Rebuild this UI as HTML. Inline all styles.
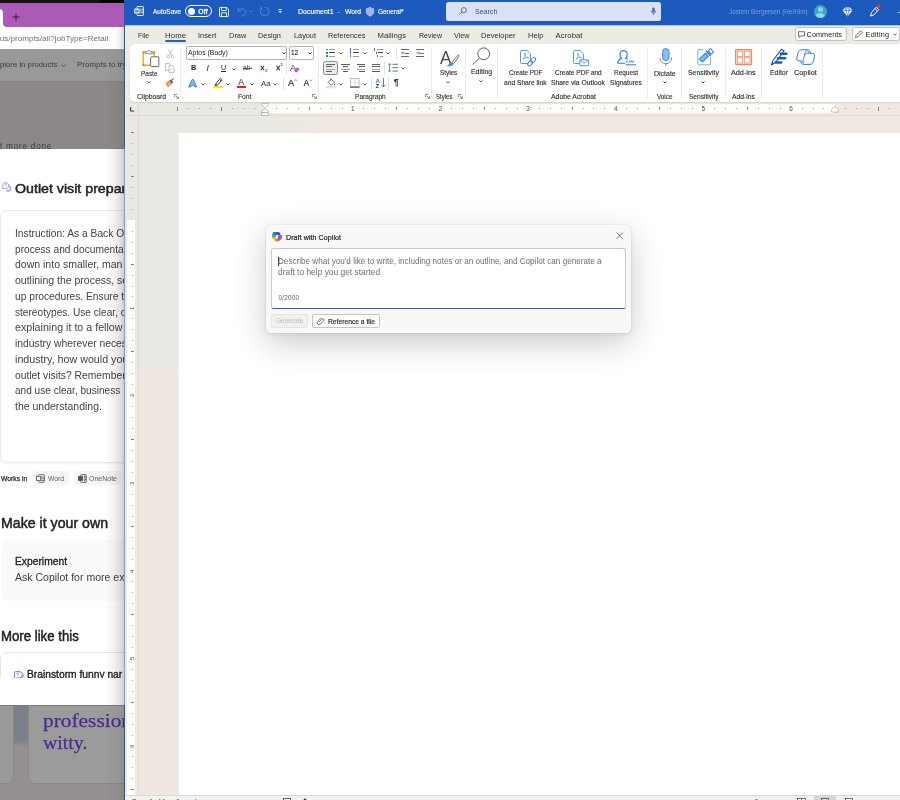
<!DOCTYPE html>
<html lang="en">
<head>
<meta charset="utf-8">
<title>Document1 - Word</title>
<style>
*{box-sizing:border-box;margin:0;padding:0}
html,body{width:900px;height:800px;overflow:hidden;background:#fff}
body{position:relative;font-family:"Liberation Sans",sans-serif;color:#262626;font-size:7px}
.a{position:absolute;display:block}
.t{position:absolute;white-space:nowrap;line-height:1;display:block;transform-origin:0 50%}
svg{overflow:visible}
#br{position:absolute;left:0;top:0;width:125px;height:800px;overflow:hidden;background:#8c8888;will-change:transform}
#wd{position:absolute;left:0;top:0;width:900px;height:800px;overflow:hidden;clip-path:inset(0 0 0 124px);will-change:transform}
#dlg{position:absolute;left:0;top:0;width:900px;height:800px;will-change:transform}
</style>
</head>
<body>
<div id="br">
<div class="a" style="left:0px;top:0px;width:125px;height:3px;background:#14130f;"></div>
<div class="a" style="left:100px;top:0px;width:25px;height:3px;background:#000;"></div>
<div class="a" style="left:0px;top:3px;width:125px;height:24px;background:#ab5ab6;"></div>
<div class="a" style="left:-6px;top:8.5px;width:9px;height:19px;background:#fff;border-radius:0 4px 0 0;"></div>
<svg class="a" style="left:11.6px;top:13px;" width="8" height="8" viewBox="0 0 8 8"><path d="M4 0.400V7.600M0.400 4H7.600" stroke="#2e1b35" stroke-width="0.900" fill="none"/></svg>
<svg class="a" style="left:3px;top:23px;" width="4" height="4" viewBox="0 0 4 4"><path d="M0 0a4 4 0 0 0 4 4H0z" fill="#fff"/></svg>
<div class="a" style="left:0px;top:27px;width:125px;height:21.5px;background:#fff;"></div>
<span class="t" style="left:-0.3px;top:35px;font-size:8.1px;color:#6e6e6e;">us/prompts/all?jobType=Retail</span>
<div class="a" style="left:0px;top:48.5px;width:125px;height:32.5px;background:#9a9999;"></div>
<span class="t" style="left:0px;top:61px;font-size:8px;transform:scaleX(0.9688);color:#3a3a3a;">plore in products</span>
<svg class="a" style="left:61px;top:63.5px;" width="5" height="3.5" viewBox="0 0 5 3.5"><path d="M0.5 0.5L2.5 2.7L4.5 0.5" stroke="#3a3a3a" stroke-width="0.8" fill="none"/></svg>
<span class="t" style="left:77.4px;top:61px;font-size:8px;transform:scaleX(0.9942);color:#3a3a3a;">Prompts to try</span>
<div class="a" style="left:0px;top:81px;width:125px;height:68px;background:#8c8888;"></div>
<div class="a" style="left:0px;top:81px;width:125px;height:1px;background:#858282;"></div>
<span class="t" style="left:0px;top:143px;font-size:8.2px;letter-spacing:0.77px;color:#3b3b3b;">t more done</span>
<div class="a" style="left:0px;top:149px;width:125px;height:556px;background:#fff;"></div>
<svg class="a" style="left:2px;top:182.4px;" width="10" height="10" viewBox="0 0 10 10"><g fill="#fff" stroke="#8a8ff0" stroke-width="0.8"><path d="M5.4 3.2a3 3 0 1 1 -1 5.6l-0.200 0.100h4.600l-0.500 -1.500a3 3 0 0 0 -2.900 -4.200z"/><path d="M3.600 0.500a3.100 3.100 0 1 1 -1.500 5.800l-1.600 0.400l0.400 -1.600a3.100 3.100 0 0 1 2.700 -4.600z"/></g><path d="M2.700 2.700a0.900 0.900 0 1 1 1.300 0.800c-0.300 0.200 -0.400 0.300 -0.400 0.600M3.600 4.900v0.300" stroke="#7378e6" stroke-width="0.600" fill="none"/></svg>
<span class="t" style="left:15px;top:182px;font-size:13.3px;transform:scaleX(1.0679);color:#242424;-webkit-text-stroke:0.5px #242424;">Outlet visit prepar</span>
<div class="a" style="left:0px;top:210px;width:140px;height:252.5px;background:#fff;border:1px solid #ebebeb;border-radius:7px;box-shadow:0 1px 2px rgba(0,0,0,.05);"></div>
<span class="t" style="left:15.4px;top:228px;font-size:10.8px;transform:scaleX(0.9471);color:#424242;">Instruction: As a Back O</span>
<span class="t" style="left:15.4px;top:244px;font-size:10.8px;transform:scaleX(0.9436);color:#424242;">process and documenta</span>
<span class="t" style="left:15.4px;top:259px;font-size:10.8px;transform:scaleX(0.9732);color:#424242;">down into smaller, man</span>
<span class="t" style="left:15.4px;top:275px;font-size:10.8px;transform:scaleX(0.9723);color:#424242;">outlining the process, se</span>
<span class="t" style="left:15.4px;top:291px;font-size:10.8px;transform:scaleX(0.9468);color:#424242;">up procedures. Ensure t</span>
<span class="t" style="left:15.4px;top:307px;font-size:10.8px;transform:scaleX(0.9375);color:#424242;">stereotypes. Use clear, c</span>
<span class="t" style="left:15.4px;top:322px;font-size:10.8px;transform:scaleX(0.9893);color:#424242;">explaining it to a fellow</span>
<span class="t" style="left:15.4px;top:338px;font-size:10.8px;transform:scaleX(0.9574);color:#424242;">industry wherever neces</span>
<span class="t" style="left:15.4px;top:354px;font-size:10.8px;transform:scaleX(0.9903);color:#424242;">industry, how would you</span>
<span class="t" style="left:15.4px;top:370px;font-size:10.8px;transform:scaleX(0.955);color:#424242;">outlet visits? Remember</span>
<span class="t" style="left:15.4px;top:385px;font-size:10.8px;transform:scaleX(0.9329);color:#424242;">and use clear, business</span>
<span class="t" style="left:15.4px;top:401px;font-size:10.8px;transform:scaleX(0.9713);color:#424242;">the understanding.</span>
<span class="t" style="left:1px;top:476px;font-size:6.9px;transform:scaleX(0.9809);color:#2e2e2e;-webkit-text-stroke:0.25px #2e2e2e;">Works in</span>
<div class="a" style="left:32px;top:471px;width:37px;height:14px;background:#f5f5f5;border-radius:2px;"></div>
<svg class="a" style="left:36px;top:473.5px;" width="9" height="9" viewBox="0 0 9 9"><g fill="none" stroke="#555" stroke-width="0.8"><rect x="2.6" y="0.6" width="5.8" height="7.8" rx="0.8"/><path d="M5 3h3.4M5 4.8h3.4M5 6.6h3.4"/><rect x="0.5" y="2.3" width="4.2" height="4.2" fill="#f5f5f5"/></g></svg>
<span class="t" style="left:48px;top:476px;font-size:6.9px;transform:scaleX(0.9779);color:#616161;">Word</span>
<div class="a" style="left:74px;top:471px;width:47px;height:14px;background:#f5f5f5;border-radius:2px;"></div>
<svg class="a" style="left:78px;top:473.5px;" width="9" height="9" viewBox="0 0 9 9"><g fill="none" stroke="#555" stroke-width="0.8"><rect x="2.6" y="0.6" width="5.8" height="7.8" rx="0.8"/><path d="M6.8 0.6v7.8M6.8 3h1.6M6.8 5.6h1.6"/><rect x="0.5" y="2.3" width="4.2" height="4.2" fill="#555"/></g></svg>
<span class="t" style="left:89px;top:476px;font-size:6.9px;letter-spacing:0.06px;color:#616161;">OneNote</span>
<span class="t" style="left:1.2px;top:516px;font-size:14.3px;transform:scaleX(0.9908);color:#242424;-webkit-text-stroke:0.5px #242424;">Make it your own</span>
<div class="a" style="left:1px;top:539.5px;width:140px;height:61px;background:#fafafa;border-radius:7px;"></div>
<span class="t" style="left:15.2px;top:556px;font-size:10.8px;transform:scaleX(0.952);color:#242424;-webkit-text-stroke:0.35px #242424;">Experiment</span>
<span class="t" style="left:15.4px;top:572px;font-size:10.8px;transform:scaleX(0.975);color:#424242;">Ask Copilot for more ex</span>
<span class="t" style="left:1.2px;top:629px;font-size:14.3px;transform:scaleX(0.9236);color:#242424;-webkit-text-stroke:0.5px #242424;">More like this</span>
<div class="a" style="left:0px;top:651.5px;width:140px;height:26px;overflow:hidden;"><div class="a" style="left:0;top:0;width:140px;height:60px;border:1px solid #e6e6e6;border-radius:7px;background:#fff"></div><svg class="a" style="left:14px;top:19px;" width="10" height="9" viewBox="0 0 10 9"><g fill="none" stroke="#5b6fe0" stroke-width="0.9"><path d="M0.6 1.6a1 1 0 0 1 1 -1h3.6a3 3 0 0 1 0 6.4h-3.2l-1.4 1.3z"/><path d="M6 7a2.8 2.8 0 0 0 3.3 -3.4"/></g><path d="M2.6 3a0.9 0.9 0 1 1 1.2 0.9c-0.2 0.2 -0.3 0.3 -0.3 0.6M3.5 5.4v0.3" stroke="#5b6fe0" stroke-width="0.7" fill="none"/></svg><span class="t" style="left:27px;top:17px;font-size:10.8px;transform:scaleX(0.95);color:#242424;-webkit-text-stroke:0.35px #242424;">Brainstorm funny nar</span></div>
<div class="a" style="left:0px;top:705px;width:125px;height:95px;background:#959193;"></div>
<div class="a" style="left:-20px;top:705px;width:33.5px;height:78.5px;background:#9b999a;border:1px solid #8b8789;border-top:0;border-radius:0 0 7px 7px;"></div>
<div class="a" style="left:13.5px;top:705px;width:14px;height:35px;background:#7b818c;"></div>
<div class="a" style="left:13.5px;top:740px;width:14px;height:8px;background:linear-gradient(#7b818c,#959193);"></div>
<div class="a" style="left:27.5px;top:705px;width:120px;height:78.5px;background:#9c9b9c;border:1px solid #8b8789;border-top:0;border-radius:0 0 0 7px;"></div>
<div class="a" style="left:0px;top:705px;width:125px;height:1.2px;background:#7f7b7d;"></div>
<span class="t" style="left:43px;top:713px;font-size:17.8px;transform:scaleX(1.2014);color:#4a2d92;font-family:'Liberation Serif',serif;-webkit-text-stroke:0.25px #4a2d92;">profession</span>
<span class="t" style="left:43px;top:735px;font-size:17.8px;transform:scaleX(1.1132);color:#4a2d92;font-family:'Liberation Serif',serif;-webkit-text-stroke:0.25px #4a2d92;">witty.</span>
<div class="a" style="left:105px;top:27px;width:20px;height:22px;background:linear-gradient(to right,rgba(0,0,0,0) 50%,rgba(0,0,0,.08) 80%,rgba(0,0,0,.2));"></div>
<div class="a" style="left:105px;top:49px;width:20px;height:99px;background:linear-gradient(to right,rgba(0,0,0,0),rgba(0,0,0,.02) 45%,rgba(0,0,0,.05) 80%,rgba(0,0,0,.09));"></div>
<div class="a" style="left:105px;top:148px;width:20px;height:557px;background:linear-gradient(to right,rgba(0,0,0,0),rgba(0,0,0,.05) 45%,rgba(0,0,0,.13) 80%,rgba(0,0,0,.22));"></div>
<div class="a" style="left:105px;top:705px;width:20px;height:95px;background:linear-gradient(to right,rgba(0,0,0,0),rgba(0,0,0,.02) 45%,rgba(0,0,0,.05) 80%,rgba(0,0,0,.09));"></div>
</div>
<div id="wd">
<div class="a" style="left:124px;top:25px;width:776px;height:78px;background:#ecebe4;"></div>
<div class="a" style="left:124px;top:0px;width:776px;height:25px;background:#1c5abd;"></div>
<div class="a" style="left:124px;top:25px;width:776px;height:1px;background:#aebfdc;"></div>
<div class="a" style="left:124px;top:102px;width:776px;height:700px;background:#efe8e0;"></div>
<div class="a" style="left:124px;top:102px;width:776px;height:31px;background:linear-gradient(to right,#e9e8e2 0,#e9e8e2 120px,#efe9e2 200px,#efe9e2 100%);"></div>
<div class="a" style="left:124px;top:133px;width:55px;height:232px;background:#e9e8e2;"></div>
<div class="a" style="left:124px;top:365px;width:55px;height:10px;background:linear-gradient(#e9e8e2,#efe8e0);"></div>
<div class="a" style="left:130px;top:43.8px;width:780px;height:58.3px;background:#fff;border-radius:5px 0 0 5px;box-shadow:0 0.5px 1.5px rgba(0,0,0,.1);"></div>
<svg class="a" style="left:134px;top:6px;" width="10" height="10" viewBox="0 0 10 10"><g fill="none" stroke="#fff" stroke-width="0.9"><path d="M3 2.2V1.2a0.7 0.7 0 0 1 0.7 -0.7h5a0.7 0.7 0 0 1 0.7 0.7v7.6a0.7 0.7 0 0 1 -0.7 0.7h-5a0.7 0.7 0 0 1 -0.7 -0.7V7.8"/><path d="M5.6 3.2h3.8M5.6 5h3.8M5.6 6.8h3.8" stroke-width="0.7"/></g><rect x="0.3" y="2.4" width="5.2" height="5.2" rx="0.6" fill="#fff"/><path d="M1.2 3.6l0.8 2.9l0.9 -2.6l0.9 2.6l0.8 -2.9" stroke="#1f5cbe" stroke-width="0.7" fill="none"/></svg>
<span class="t" style="left:153.2px;top:8px;font-size:7.3px;transform:scaleX(0.8876);color:#fff;-webkit-text-stroke:0.15px #fff;">AutoSave</span>
<div class="a" style="left:185px;top:5.3px;width:26.6px;height:11.6px;border:1px solid #fff;border-radius:6px;"></div>
<div class="a" style="left:187.6px;top:7.6px;width:7px;height:7px;background:#fff;border-radius:50%;"></div>
<span class="t" style="left:198.3px;top:9px;font-size:6.8px;letter-spacing:0.18px;color:#fff;-webkit-text-stroke:0.3px #fff;">Off</span>
<svg class="a" style="left:219px;top:6.5px;" width="10" height="10" viewBox="0 0 10 10"><g fill="none" stroke="#fff" stroke-width="0.9"><path d="M0.5 1.2a0.7 0.7 0 0 1 0.7 -0.7h6.6l1.7 1.7v6.6a0.7 0.7 0 0 1 -0.7 0.7h-7.6a0.7 0.7 0 0 1 -0.7 -0.7z"/><path d="M2.6 0.6v3h4.6v-3M2.4 9.4v-3.6h5.2v3.6"/></g></svg>
<svg class="a" style="left:236.5px;top:6.5px;" width="10" height="10" viewBox="0 0 10 10"><path d="M1 0.8v3.4h3.4M1.2 4a4 4 0 0 1 7.6 1.4c0 1.6 -1.3 2.6 -4.4 4" fill="none" stroke="#5f88d4" stroke-width="0.9"/></svg>
<svg class="a" style="left:248.8px;top:9.8px;" width="4" height="3" viewBox="0 0 4 3"><path d="M0.4 0.5L2 2.2L3.6 0.5" fill="none" stroke="#5f88d4" stroke-width="0.8"/></svg>
<svg class="a" style="left:259px;top:6.2px;" width="10.5" height="10.5" viewBox="0 0 10.5 10.5"><path d="M2.400 0.600v3M2.600 2.600a4.300 4.300 0 1 0 3 -1.400" fill="none" stroke="#5f88d4" stroke-width="0.900"/></svg>
<svg class="a" style="left:278px;top:9px;" width="4.4" height="4.6" viewBox="0 0 4.4 4.6"><path d="M0.400 0.500h3.600" stroke="#fff" stroke-width="0.800"/><path d="M0.500 2h3.400L2.200 4z" fill="#fff"/></svg>
<span class="t" style="left:297.7px;top:8px;font-size:7.3px;transform:scaleX(0.9563);color:#fff;-webkit-text-stroke:0.15px #fff;">Document1</span>
<span class="t" style="left:337.6px;top:9px;font-size:6.9px;color:#fff;">-</span>
<span class="t" style="left:344.6px;top:8px;font-size:7.3px;transform:scaleX(0.9243);color:#fff;-webkit-text-stroke:0.15px #fff;">Word</span>
<svg class="a" style="left:366px;top:6.6px;" width="8" height="9.6" viewBox="0 0 8 9.6"><path d="M4 0.3c1.2 0.9 2.4 1.2 3.7 1.3v3.2c0 2.2 -1.5 3.6 -3.7 4.5c-2.2 -0.9 -3.7 -2.3 -3.7 -4.5V1.6c1.3 -0.1 2.5 -0.4 3.7 -1.3z" fill="#9db6e6" stroke="#c9d7f2" stroke-width="0.6"/></svg>
<span class="t" style="left:377.6px;top:8px;font-size:7.3px;transform:scaleX(0.8816);color:#fff;-webkit-text-stroke:0.15px #fff;">General*</span>
<div class="a" style="left:446px;top:2px;width:215px;height:18.7px;background:#d9e1f3;border-radius:2.5px;"></div>
<svg class="a" style="left:459px;top:7px;" width="8" height="8" viewBox="0 0 8 8"><circle cx="4.9" cy="3.1" r="2.5" fill="none" stroke="#2b57a8" stroke-width="0.8"/><path d="M3.1 4.9L0.5 7.5" stroke="#2b57a8" stroke-width="0.8"/></svg>
<span class="t" style="left:475px;top:8px;font-size:7px;letter-spacing:0.02px;color:#2c4f95;">Search</span>
<svg class="a" style="left:650.5px;top:7px;" width="5" height="9" viewBox="0 0 5 9"><rect x="1.3" y="0.4" width="2.4" height="5" rx="1.2" fill="#3b68bd"/><path d="M0.4 3.6v0.6a2.1 2.1 0 0 0 4.2 0v-0.6M2.5 6.4v1.8" fill="none" stroke="#3b68bd" stroke-width="0.7"/></svg>
<span class="t" style="left:728.8px;top:9px;font-size:6.6px;transform:scaleX(0.9665);color:#7d9fde;">Jostein Bergersen (He/Him)</span>
<div class="a" style="left:813.5px;top:5px;width:13px;height:13px;background:#3aa7c4;border-radius:50%;overflow:hidden;"><div class="a" style="left:4px;top:2.2px;width:5px;height:5px;border-radius:50%;background:#8fd6e6"></div><div class="a" style="left:1.8px;top:8px;width:9.4px;height:8px;border-radius:4.5px 4.5px 0 0;background:#8fd6e6"></div></div>
<svg class="a" style="left:842px;top:6.5px;" width="11" height="10" viewBox="0 0 11 10"><path d="M3 0.6h5l2.4 3L5.5 9.4L0.6 3.6z" fill="#fff"/><path d="M0.8 3.6h9.4M3.2 0.8l2.3 8.2l2.3 -8.2M3.4 3.6l2.1 -2.8l2.1 2.8" fill="none" stroke="#1f5cbe" stroke-width="0.6"/></svg>
<svg class="a" style="left:869px;top:4px;" width="12" height="13" viewBox="0 0 12 13"><path d="M7.3 3.2l2.4 2.4l-5 5.4l-3.2 1l0.9 -3.3z" fill="none" stroke="#fff" stroke-width="1"/><path d="M6 4.6l2.4 2.4" stroke="#fff" stroke-width="0.8"/><circle cx="9.6" cy="2.2" r="2" fill="#e5332f"/></svg>
<span class="t" style="left:897.5px;top:8px;font-size:8px;color:#fff;">–</span>
<span class="t" style="left:138px;top:32px;font-size:7.7px;transform:scaleX(0.8865);color:#2f2f2f;">File</span>
<span class="t" style="left:165px;top:32px;font-size:7.7px;letter-spacing:0.15px;color:#2f2f2f;">Home</span>
<span class="t" style="left:197.6px;top:32px;font-size:7.7px;transform:scaleX(0.9555);color:#2f2f2f;">Insert</span>
<span class="t" style="left:228.6px;top:32px;font-size:7.7px;transform:scaleX(0.9684);color:#2f2f2f;">Draw</span>
<span class="t" style="left:258px;top:32px;font-size:7.7px;transform:scaleX(0.9596);color:#2f2f2f;">Design</span>
<span class="t" style="left:294px;top:32px;font-size:7.7px;transform:scaleX(0.9516);color:#2f2f2f;">Layout</span>
<span class="t" style="left:328px;top:32px;font-size:7.7px;transform:scaleX(0.9523);color:#2f2f2f;">References</span>
<span class="t" style="left:377.5px;top:32px;font-size:7.7px;letter-spacing:0.04px;color:#2f2f2f;">Mailings</span>
<span class="t" style="left:418.5px;top:32px;font-size:7.7px;transform:scaleX(0.911);color:#2f2f2f;">Review</span>
<span class="t" style="left:453.5px;top:32px;font-size:7.7px;transform:scaleX(0.9365);color:#2f2f2f;">View</span>
<span class="t" style="left:481px;top:32px;font-size:7.7px;transform:scaleX(0.9829);color:#2f2f2f;">Developer</span>
<span class="t" style="left:527.5px;top:32px;font-size:7.7px;transform:scaleX(0.9787);color:#2f2f2f;">Help</span>
<span class="t" style="left:555.5px;top:32px;font-size:7.7px;letter-spacing:0.08px;color:#2f2f2f;">Acrobat</span>
<div class="a" style="left:164.5px;top:40px;width:21.6px;height:1.6px;background:#2a5fc0;border-radius:1px;"></div>
<div class="a" style="left:794.5px;top:27.3px;width:52px;height:13.4px;background:#fff;border:1px solid #c6c3bf;border-radius:2.5px;"></div>
<svg class="a" style="left:798px;top:30.5px;" width="7" height="7" viewBox="0 0 7 7"><path d="M0.5 0.7h6v4.2h-3.6l-1.5 1.5v-1.5h-0.9z" fill="none" stroke="#333" stroke-width="0.7"/></svg>
<span class="t" style="left:806.6px;top:31px;font-size:7.3px;letter-spacing:0.02px;color:#222;">Comments</span>
<div class="a" style="left:851.5px;top:27.3px;width:48px;height:13.4px;background:#fff;border:1px solid #c6c3bf;border-radius:2.5px;"></div>
<svg class="a" style="left:855px;top:29.8px;" width="8" height="8" viewBox="0 0 8 8"><path d="M5.6 0.8l1.6 1.6l-4.6 4.6l-2.1 0.5l0.5 -2.1z" fill="none" stroke="#333" stroke-width="0.7"/></svg>
<span class="t" style="left:865.6px;top:31px;font-size:7.3px;letter-spacing:0.18px;color:#222;">Editing</span>
<svg class="a" style="left:893px;top:32.8px;" width="4" height="3" viewBox="0 0 4 3"><path d="M0.4 0.5L2 2.2L3.6 0.5" fill="none" stroke="#333" stroke-width="0.7"/></svg>
<svg class="a" style="left:142px;top:48.5px;" width="17" height="18" viewBox="0 0 17 18"><path d="M12.2 6.6V3.1H1.2V16.2H8.2" fill="none" stroke="#f5a52b" stroke-width="1.4"/><path d="M12.2 6.6V3.100h-1.500M1.200 4.500V3.100h1.600M1.200 14.800v1.400h1.600" fill="none" stroke="#f0812d" stroke-width="1.400"/><path d="M3.400 4.700V2.900h1.500a2 2 0 0 1 3.800 0h1.500v1.800z" fill="#fff" stroke="#707070" stroke-width="0.800" stroke-linejoin="round"/><rect x="8.600" y="7.800" width="8.200" height="9.800" rx="0.700" fill="#fff" stroke="#666" stroke-width="1"/></svg>
<span class="t" style="left:141px;top:70px;font-size:7.5px;transform:scaleX(0.8603);color:#2b2b2b;-webkit-text-stroke:0.12px #2b2b2b;">Paste</span>
<svg class="a" style="left:146.9px;top:81.4px;" width="4" height="2.4" viewBox="0 0 4 2.4"><path d="M0.4 0.4L2 2L3.6 0.4" fill="none" stroke="#444" stroke-width="0.9"/></svg>
<svg class="a" style="left:165.5px;top:48.5px;" width="9" height="9.5" viewBox="0 0 9 9.5"><path d="M2.2 0.4L5.8 6.6M6.6 0.4L3 6.6" fill="none" stroke="#b4b4b4" stroke-width="0.8"/><circle cx="2.3" cy="7.7" r="1.3" fill="none" stroke="#b4b4b4" stroke-width="0.8"/><circle cx="6.5" cy="7.7" r="1.3" fill="none" stroke="#b4b4b4" stroke-width="0.8"/></svg>
<svg class="a" style="left:165.2px;top:62.8px;" width="10" height="10" viewBox="0 0 10 10"><path d="M0.5 0.5h3.8l1.2 1.2v5.8h-5z" fill="#fff" stroke="#b4b4b4" stroke-width="0.8"/><path d="M4 2.6h3.4l1.8 1.8v5.2h-5.2z" fill="#fff" stroke="#b4b4b4" stroke-width="0.8"/><path d="M5.4 6.8h2.4" stroke="#c8c8c8" stroke-width="0.6"/></svg>
<svg class="a" style="left:165px;top:78.3px;" width="10" height="9.5" viewBox="0 0 10 9.5"><path d="M0.400 5.400L4.400 2.200l2.800 3.600L3.600 8.900c-1 -0.100 -1.600 -0.500 -1.900 -1.300c0.500 -0.300 0.600 -0.600 0.500 -1c-0.600 0.100 -1.300 -0.300 -1.800 -1.200z" fill="#f47a22"/><path d="M2.300 5.200l2.500 2.900M3.600 4.200l2.400 3" stroke="#fff" stroke-width="0.700"/><path d="M4.600 2.400l1.400 -1.100l2.300 2.900l-1.300 1.200z" fill="#5a5a5a"/><path d="M7 1.900L8.800 0.400" stroke="#5a5a5a" stroke-width="1.100"/></svg>
<span class="t" style="left:136.9px;top:93px;font-size:7.5px;transform:scaleX(0.9064);color:#2b2b2b;-webkit-text-stroke:0.12px #2b2b2b;">Clipboard</span>
<svg class="a" style="left:174px;top:94px;" width="5" height="5" viewBox="0 0 5 5"><path d="M0.4 3.2V0.4H3.2" fill="none" stroke="#555" stroke-width="0.7"/><path d="M2 2L4.2 4.2M4.4 2.4V4.4H2.4" fill="none" stroke="#555" stroke-width="0.7"/></svg>
<div class="a" style="left:179.9px;top:46.5px;width:1px;height:52.5px;background:#ececec;"></div>
<div class="a" style="left:186.3px;top:46.4px;width:101.2px;height:13.3px;background:#fff;border:1px solid #b2b2b2;border-radius:2px;"></div>
<span class="t" style="left:188.2px;top:49px;font-size:7.5px;transform:scaleX(0.918);color:#1f1f1f;">Aptos (Body)</span>
<svg class="a" style="left:281.6px;top:51.9px;" width="4" height="2.4" viewBox="0 0 4 2.4"><path d="M0.4 0.4L2 2L3.6 0.4" fill="none" stroke="#333" stroke-width="0.9"/></svg>
<div class="a" style="left:289.3px;top:46.4px;width:24.5px;height:13.3px;background:#fff;border:1px solid #b2b2b2;border-radius:2px;"></div>
<span class="t" style="left:291.4px;top:49px;font-size:7.5px;transform:scaleX(0.8511);color:#1f1f1f;-webkit-text-stroke:0.15px #1f1f1f;">12</span>
<svg class="a" style="left:308px;top:51.9px;" width="4" height="2.4" viewBox="0 0 4 2.4"><path d="M0.4 0.4L2 2L3.6 0.4" fill="none" stroke="#333" stroke-width="0.9"/></svg>
<span class="t" style="left:190.9px;top:64px;font-size:7.4px;color:#2b2b2b;font-weight:700;">B</span>
<span class="t" style="left:206.6px;top:64px;font-size:8.4px;color:#2b2b2b;font-style:italic;">I</span>
<span class="t" style="left:221px;top:64px;font-size:7.2px;color:#2b2b2b;">U</span>
<div class="a" style="left:220.6px;top:71.3px;width:5.6px;height:0.7px;background:#2b2b2b;"></div>
<svg class="a" style="left:232.2px;top:67.5px;" width="4" height="2.4" viewBox="0 0 4 2.4"><path d="M0.4 0.4L2 2L3.6 0.4" fill="none" stroke="#444" stroke-width="0.9"/></svg>
<span class="t" style="left:243.4px;top:64px;font-size:7px;transform:scaleX(0.9761);color:#444;">ab</span>
<div class="a" style="left:242.8px;top:67.9px;width:8.8px;height:0.6px;background:#555;"></div>
<span class="t" style="left:260.6px;top:64px;font-size:7.8px;color:#2b2b2b;-webkit-text-stroke:0.3px #2b2b2b;">x</span>
<span class="t" style="left:265.2px;top:69px;font-size:4px;color:#2b7bd6;-webkit-text-stroke:0.2px #2b7bd6;">2</span>
<span class="t" style="left:276.2px;top:64px;font-size:7.8px;color:#2b2b2b;-webkit-text-stroke:0.3px #2b2b2b;">x</span>
<span class="t" style="left:280.4px;top:63px;font-size:4px;color:#2b7bd6;-webkit-text-stroke:0.2px #2b7bd6;">2</span>
<div class="a" style="left:286.2px;top:61.5px;width:1px;height:13.5px;background:#e4e4e4;"></div>
<span class="t" style="left:290px;top:63px;font-size:9.4px;color:#3a3a3a;">A</span>
<svg class="a" style="left:294px;top:67px;" width="5.6" height="5.8" viewBox="0 0 5.6 5.8"><rect x="0.800" y="1.700" width="4" height="2.600" rx="0.500" transform="rotate(-40 2.800 3)" fill="#b44cc4" stroke="#a13bb0" stroke-width="0.600"/><path d="M2.300 2.200l1.500 1.800" stroke="#f0d5f3" stroke-width="0.600"/></svg>
<svg class="a" style="left:188.3px;top:79px;" width="9.5" height="8.4" viewBox="0 0 9.5 8.4"><path d="M0.9 7.9L4.1 0.6h1.3L8.6 7.9H6.9L6.2 6.2H3.3L2.6 7.9z" fill="#a9cdf5" stroke="#2a76d8" stroke-width="1" stroke-linejoin="round"/><path d="M3.9 4.8h1.7L4.75 2.6z" fill="#fff" stroke="#2672d6" stroke-width="0.5"/></svg>
<svg class="a" style="left:200.7px;top:82.7px;" width="4" height="2.4" viewBox="0 0 4 2.4"><path d="M0.4 0.4L2 2L3.6 0.4" fill="none" stroke="#444" stroke-width="0.9"/></svg>
<svg class="a" style="left:213px;top:77.8px;" width="10" height="10.2" viewBox="0 0 10 10.2"><path d="M2.400 6.200L6.400 1.400l1.800 1.500L4.200 7.600l-2.200 0.500z" fill="#fff" stroke="#3a3a3a" stroke-width="1"/><path d="M6.400 1.400L7.400 0.400l1.800 1.500l-1 1" fill="none" stroke="#3a3a3a" stroke-width="0.900"/><path d="M2 8.100l1.800 -2.200" stroke="#3a3a3a" stroke-width="1"/><rect x="0" y="8" width="9.6" height="2.1" fill="#ffeb00"/></svg>
<svg class="a" style="left:226.3px;top:82.7px;" width="4" height="2.4" viewBox="0 0 4 2.4"><path d="M0.4 0.4L2 2L3.6 0.4" fill="none" stroke="#444" stroke-width="0.9"/></svg>
<span class="t" style="left:238.2px;top:78px;font-size:8.8px;color:#2b2b2b;">A</span>
<div class="a" style="left:236.6px;top:85.8px;width:9.7px;height:2.1px;background:#e81e25;"></div>
<svg class="a" style="left:250.2px;top:82.7px;" width="4" height="2.4" viewBox="0 0 4 2.4"><path d="M0.4 0.4L2 2L3.6 0.4" fill="none" stroke="#444" stroke-width="0.9"/></svg>
<span class="t" style="left:260.9px;top:80px;font-size:7.8px;letter-spacing:0.26px;color:#3a3a3a;">Aa</span>
<svg class="a" style="left:273.3px;top:82.7px;" width="4" height="2.4" viewBox="0 0 4 2.4"><path d="M0.4 0.4L2 2L3.6 0.4" fill="none" stroke="#444" stroke-width="0.9"/></svg>
<div class="a" style="left:283px;top:76.5px;width:1px;height:13.8px;background:#e4e4e4;"></div>
<span class="t" style="left:288px;top:79px;font-size:9.2px;color:#2b2b2b;-webkit-text-stroke:0.2px #2b2b2b;">A</span>
<svg class="a" style="left:294.4px;top:79px;" width="3.6" height="2.4" viewBox="0 0 3.6 2.4"><path d="M0.4 2L1.8 0.5L3.2 2" fill="none" stroke="#2b7bd6" stroke-width="0.7"/></svg>
<span class="t" style="left:303.8px;top:80px;font-size:8.2px;color:#2b2b2b;-webkit-text-stroke:0.2px #2b2b2b;">A</span>
<svg class="a" style="left:308.8px;top:79.2px;" width="3.6" height="2.4" viewBox="0 0 3.6 2.4"><path d="M0.4 0.5L1.8 2L3.2 0.5" fill="none" stroke="#2b7bd6" stroke-width="0.7"/></svg>
<span class="t" style="left:238.3px;top:93px;font-size:7.5px;transform:scaleX(0.8995);color:#2b2b2b;-webkit-text-stroke:0.12px #2b2b2b;">Font</span>
<svg class="a" style="left:311.8px;top:94px;" width="5" height="5" viewBox="0 0 5 5"><path d="M0.4 3.2V0.4H3.2" fill="none" stroke="#555" stroke-width="0.7"/><path d="M2 2L4.2 4.2M4.4 2.4V4.4H2.4" fill="none" stroke="#555" stroke-width="0.7"/></svg>
<div class="a" style="left:317.9px;top:46.5px;width:1px;height:52.5px;background:#ececec;"></div>
<div class="a" style="left:325.9px;top:48.5px;width:1.8px;height:1.8px;background:#2b7bd6;border-radius:0.3px;"></div><div class="a" style="left:328.9px;top:48.95px;width:5.9px;height:0.9px;background:#9a9a9a;"></div><div class="a" style="left:325.9px;top:51.8px;width:1.8px;height:1.8px;background:#2b7bd6;border-radius:0.3px;"></div><div class="a" style="left:328.9px;top:52.25px;width:5.9px;height:0.9px;background:#4a4a4a;"></div><div class="a" style="left:325.9px;top:55.2px;width:1.8px;height:1.8px;background:#2b7bd6;border-radius:0.3px;"></div><div class="a" style="left:328.9px;top:55.65px;width:5.9px;height:0.9px;background:#9a9a9a;"></div>
<svg class="a" style="left:339.2px;top:51.9px;" width="4" height="2.4" viewBox="0 0 4 2.4"><path d="M0.4 0.4L2 2L3.6 0.4" fill="none" stroke="#444" stroke-width="0.9"/></svg>
<div class="a" style="left:350.4px;top:48.1px;width:0.9px;height:2.6px;background:#2b7bd6;"></div><div class="a" style="left:352.9px;top:48.95px;width:5.9px;height:0.9px;background:#9a9a9a;"></div><div class="a" style="left:350.4px;top:51.4px;width:0.9px;height:2.6px;background:#2b7bd6;"></div><div class="a" style="left:352.9px;top:52.25px;width:5.9px;height:0.9px;background:#4a4a4a;"></div><div class="a" style="left:350.4px;top:54.8px;width:0.9px;height:2.6px;background:#2b7bd6;"></div><div class="a" style="left:352.9px;top:55.65px;width:5.9px;height:0.9px;background:#9a9a9a;"></div>
<svg class="a" style="left:363px;top:51.9px;" width="4" height="2.4" viewBox="0 0 4 2.4"><path d="M0.4 0.4L2 2L3.6 0.4" fill="none" stroke="#444" stroke-width="0.9"/></svg>
<div class="a" style="left:374.2px;top:48.2px;width:0.9px;height:2.4px;background:#2b7bd6;"></div><div class="a" style="left:376.6px;top:48.95px;width:6.2px;height:0.9px;background:#9a9a9a;"></div><div class="a" style="left:375.8px;top:51.5px;width:0.9px;height:2.4px;background:#2b7bd6;"></div><div class="a" style="left:378.2px;top:52.25px;width:4.6px;height:0.9px;background:#4a4a4a;"></div><div class="a" style="left:377.4px;top:54.9px;width:0.9px;height:2.4px;background:#2b7bd6;"></div><div class="a" style="left:379.8px;top:55.65px;width:3px;height:0.9px;background:#9a9a9a;"></div>
<svg class="a" style="left:386.2px;top:51.9px;" width="4" height="2.4" viewBox="0 0 4 2.4"><path d="M0.4 0.4L2 2L3.6 0.4" fill="none" stroke="#444" stroke-width="0.9"/></svg>
<div class="a" style="left:395.9px;top:46.5px;width:1px;height:13px;background:#e4e4e4;"></div>
<div class="a" style="left:400.6px;top:49.1px;width:8.6px;height:0.8px;background:#6b6b6b;"></div><div class="a" style="left:400.6px;top:55.9px;width:8.6px;height:0.8px;background:#6b6b6b;"></div><div class="a" style="left:405.2px;top:52.5px;width:4px;height:0.8px;background:#6b6b6b;"></div><svg class="a" style="left:400.6px;top:51px;" width="4.4" height="3.8" viewBox="0 0 4.4 3.8"><path d="M4.2 1.9H1M2.2 0.5L0.7 1.9L2.2 3.3" fill="none" stroke="#2b7bd6" stroke-width="0.8"/></svg>
<div class="a" style="left:415.8px;top:49.1px;width:8.6px;height:0.8px;background:#6b6b6b;"></div><div class="a" style="left:415.8px;top:55.9px;width:8.6px;height:0.8px;background:#6b6b6b;"></div><div class="a" style="left:420.4px;top:52.5px;width:4px;height:0.8px;background:#6b6b6b;"></div><svg class="a" style="left:415.8px;top:51px;" width="4.4" height="3.8" viewBox="0 0 4.4 3.8"><path d="M0.2 1.9H3.4M2.2 0.5L3.7 1.9L2.2 3.3" fill="none" stroke="#2b7bd6" stroke-width="0.8"/></svg>
<div class="a" style="left:323.3px;top:61.2px;width:14.4px;height:13.6px;background:#ececec;border:1px solid #8a8a8a;border-radius:2.500px;"></div>
<div class="a" style="left:326.2px;top:64.1px;width:8.6px;height:0.85px;background:#5c5c5c;"></div><div class="a" style="left:326.2px;top:66.45px;width:6px;height:0.85px;background:#5c5c5c;"></div><div class="a" style="left:326.2px;top:68.8px;width:8.6px;height:0.85px;background:#a8a8a8;"></div><div class="a" style="left:326.2px;top:71.15px;width:6px;height:0.85px;background:#5c5c5c;"></div>
<div class="a" style="left:341.4px;top:64.1px;width:8.6px;height:0.85px;background:#5c5c5c;"></div><div class="a" style="left:342.9px;top:66.45px;width:5.6px;height:0.85px;background:#5c5c5c;"></div><div class="a" style="left:341.4px;top:68.8px;width:8.6px;height:0.85px;background:#a8a8a8;"></div><div class="a" style="left:342.9px;top:71.15px;width:5.6px;height:0.85px;background:#5c5c5c;"></div>
<div class="a" style="left:356.6px;top:64.1px;width:8.6px;height:0.85px;background:#5c5c5c;"></div><div class="a" style="left:359.2px;top:66.45px;width:6px;height:0.85px;background:#5c5c5c;"></div><div class="a" style="left:356.6px;top:68.8px;width:8.6px;height:0.85px;background:#a8a8a8;"></div><div class="a" style="left:359.2px;top:71.15px;width:6px;height:0.85px;background:#5c5c5c;"></div>
<div class="a" style="left:371.8px;top:64.1px;width:8.6px;height:0.85px;background:#5c5c5c;"></div><div class="a" style="left:371.8px;top:66.45px;width:8.6px;height:0.85px;background:#5c5c5c;"></div><div class="a" style="left:371.8px;top:68.8px;width:8.6px;height:0.85px;background:#a8a8a8;"></div><div class="a" style="left:371.8px;top:71.15px;width:8.6px;height:0.85px;background:#5c5c5c;"></div>
<div class="a" style="left:383.8px;top:61.3px;width:1px;height:13.7px;background:#e4e4e4;"></div>
<svg class="a" style="left:388px;top:63.4px;" width="10.4" height="9.6" viewBox="0 0 10.4 9.6"><path d="M1.6 0.6V8.8M0.3 2L1.6 0.5L2.9 2M0.3 7.4L1.6 8.9L2.9 7.4" fill="none" stroke="#2b7bd6" stroke-width="0.8"/><path d="M4.4 1.3h5.8M4.4 4.7h5.8M4.4 8.1h5.8" stroke="#4f4f4f" stroke-width="0.8"/></svg>
<svg class="a" style="left:400.9px;top:67.1px;" width="4" height="2.4" viewBox="0 0 4 2.4"><path d="M0.4 0.4L2 2L3.6 0.4" fill="none" stroke="#444" stroke-width="0.9"/></svg>
<svg class="a" style="left:325.6px;top:78px;" width="10.2" height="10.2" viewBox="0 0 10.2 10.2"><path d="M2.2 4.4L5.2 1.2l3 3.2l-3 3z" fill="#fff" stroke="#4f4f4f" stroke-width="0.8" stroke-linejoin="round"/><path d="M4.4 0.3v2.2" stroke="#4f4f4f" stroke-width="0.7"/><path d="M8.6 5.2c0.5 0.8 0.8 1.2 0.8 1.6a0.8 0.8 0 0 1 -1.6 0c0 -0.4 0.3 -0.8 0.8 -1.6z" fill="#2b7bd6"/><rect x="0.6" y="8.3" width="9" height="1.7" fill="#f2f2f2" stroke="#bdbdbd" stroke-width="0.4"/></svg>
<svg class="a" style="left:339.2px;top:82.7px;" width="4" height="2.4" viewBox="0 0 4 2.4"><path d="M0.4 0.4L2 2L3.6 0.4" fill="none" stroke="#444" stroke-width="0.9"/></svg>
<svg class="a" style="left:349.6px;top:78.2px;" width="9.6" height="9.6" viewBox="0 0 9.6 9.6"><rect x="0.500" y="0.500" width="8.600" height="8.600" fill="#fff" stroke="#b0b0b0" stroke-width="0.800"/><path d="M4.800 0.500v8.600M0.500 4.800h8.600" stroke="#b8b8b8" stroke-width="0.600" stroke-dasharray="1 0.600"/><path d="M0.100 9.100h9.400" stroke="#4a4a4a" stroke-width="1.100"/></svg>
<svg class="a" style="left:363px;top:82.7px;" width="4" height="2.4" viewBox="0 0 4 2.4"><path d="M0.4 0.4L2 2L3.6 0.4" fill="none" stroke="#444" stroke-width="0.9"/></svg>
<div class="a" style="left:371px;top:76.5px;width:1px;height:13.8px;background:#e4e4e4;"></div>
<span class="t" style="left:375.4px;top:78px;font-size:6.2px;color:#2b7bd6;font-weight:700;">A</span>
<span class="t" style="left:375.6px;top:83px;font-size:6.2px;color:#333;font-weight:700;">Z</span>
<svg class="a" style="left:380.6px;top:78.4px;" width="5" height="9.6" viewBox="0 0 5 9.6"><path d="M2.5 0.2V8.8M0.5 6.8L2.5 8.9L4.5 6.8" fill="none" stroke="#4f4f4f" stroke-width="0.8"/></svg>
<div class="a" style="left:388.2px;top:76.5px;width:1px;height:13.8px;background:#e4e4e4;"></div>
<span class="t" style="left:393.8px;top:78px;font-size:9px;color:#2b2b2b;font-weight:700;">¶</span>
<span class="t" style="left:355.1px;top:93px;font-size:7.5px;transform:scaleX(0.8765);color:#2b2b2b;-webkit-text-stroke:0.12px #2b2b2b;">Paragraph</span>
<svg class="a" style="left:424.7px;top:94px;" width="5" height="5" viewBox="0 0 5 5"><path d="M0.4 3.2V0.4H3.2" fill="none" stroke="#555" stroke-width="0.7"/><path d="M2 2L4.2 4.2M4.4 2.4V4.4H2.4" fill="none" stroke="#555" stroke-width="0.7"/></svg>
<div class="a" style="left:431.4px;top:46.5px;width:1px;height:52.5px;background:#ececec;"></div>
<span class="t" style="left:440.2px;top:49px;font-size:18.6px;transform:scaleX(0.9189);color:#4a4a4a;">A</span>
<svg class="a" style="left:444.5px;top:53.5px;" width="15" height="13" viewBox="0 0 15 13"><path d="M13.6 1.2L8 9.6" stroke="#fff" stroke-width="3"/><path d="M13.2 0.8l1.2 0.9L8.6 9.8l-1.8 -1.2z" fill="#fff" stroke="#4f4f4f" stroke-width="0.8"/><path d="M6.6 8.6l2 1.4c-0.8 1.8 -3.6 2.8 -7.4 2.2c1.8 -0.6 2.4 -1.4 2.8 -2.4c0.6 -1.2 1.6 -1.6 2.6 -1.2z" fill="#3d8fe6"/></svg>
<span class="t" style="left:440px;top:69px;font-size:7.5px;transform:scaleX(0.847);color:#2b2b2b;-webkit-text-stroke:0.12px #2b2b2b;">Styles</span>
<svg class="a" style="left:446.3px;top:80.7px;" width="4" height="2.4" viewBox="0 0 4 2.4"><path d="M0.4 0.4L2 2L3.6 0.4" fill="none" stroke="#444" stroke-width="0.9"/></svg>
<span class="t" style="left:435.6px;top:93px;font-size:7.5px;transform:scaleX(0.803);color:#2b2b2b;-webkit-text-stroke:0.12px #2b2b2b;">Styles</span>
<svg class="a" style="left:458.4px;top:94px;" width="5" height="5" viewBox="0 0 5 5"><path d="M0.4 3.2V0.4H3.2" fill="none" stroke="#555" stroke-width="0.7"/><path d="M2 2L4.2 4.2M4.4 2.4V4.4H2.4" fill="none" stroke="#555" stroke-width="0.7"/></svg>
<div class="a" style="left:465.1px;top:46.5px;width:1px;height:52.5px;background:#ececec;"></div>
<svg class="a" style="left:472px;top:47px;" width="19" height="19" viewBox="0 0 19 19"><circle cx="11.7" cy="6.8" r="5.9" fill="none" stroke="#4f4f4f" stroke-width="0.9"/><path d="M7.6 11L0.7 17.6" stroke="#4f4f4f" stroke-width="0.9"/></svg>
<span class="t" style="left:470.8px;top:68px;font-size:7.5px;transform:scaleX(0.9244);color:#2b2b2b;-webkit-text-stroke:0.12px #2b2b2b;">Editing</span>
<svg class="a" style="left:479.1px;top:79.7px;" width="4" height="2.4" viewBox="0 0 4 2.4"><path d="M0.4 0.4L2 2L3.6 0.4" fill="none" stroke="#444" stroke-width="0.9"/></svg>
<div class="a" style="left:497px;top:46.5px;width:1px;height:52.5px;background:#ececec;"></div>
<svg class="a" style="left:520px;top:50px;" width="16" height="17" viewBox="0 0 16 17"><path d="M0.5 1.5a1 1 0 0 1 1 -1h5.6l3.4 3.4v8.6a1 1 0 0 1 -1 1h-8a1 1 0 0 1 -1 -1z" fill="#fff" stroke="#3f83ea" stroke-width="0.85"/><path d="M3 9.2c1.6 -1.6 2.4 -3.8 2.4 -5.6c0 -0.8 -0.9 -0.8 -0.9 0c0 1.8 1.6 3.6 3.6 4.4c0.8 0.3 0.8 -0.8 0 -0.8c-1.8 0 -3.6 0.8 -5.1 2z" fill="none" stroke="#3f83ea" stroke-width="0.6"/><g fill="#fff" stroke="#3f83ea" stroke-width="0.95"><ellipse cx="10.200" cy="13.400" rx="2.900" ry="1.900" transform="rotate(-48 10.200 13.400)"/><ellipse cx="13.200" cy="10" rx="2.900" ry="1.900" transform="rotate(-48 13.200 10)" fill="none"/></g></svg>
<span class="t" style="left:508.9px;top:69px;font-size:7.5px;transform:scaleX(0.841);color:#2b2b2b;-webkit-text-stroke:0.12px #2b2b2b;">Create PDF</span>
<span class="t" style="left:504.1px;top:79px;font-size:7.5px;transform:scaleX(0.8884);color:#2b2b2b;-webkit-text-stroke:0.12px #2b2b2b;">and Share link</span>
<svg class="a" style="left:572.8px;top:50px;" width="16" height="17" viewBox="0 0 16 17"><path d="M0.5 1.5a1 1 0 0 1 1 -1h5.6l3.4 3.4v8.6a1 1 0 0 1 -1 1h-8a1 1 0 0 1 -1 -1z" fill="#fff" stroke="#3f83ea" stroke-width="0.85"/><path d="M3 9.2c1.6 -1.6 2.4 -3.8 2.4 -5.6c0 -0.8 -0.9 -0.8 -0.9 0c0 1.8 1.6 3.6 3.6 4.4c0.8 0.3 0.8 -0.8 0 -0.8c-1.8 0 -3.6 0.8 -5.1 2z" fill="none" stroke="#3f83ea" stroke-width="0.6"/><rect x="6.8" y="9.8" width="8.6" height="6" rx="0.6" fill="#fff" stroke="#3f83ea" stroke-width="0.9"/><path d="M7 10.2l4.1 3l4.1 -3" fill="none" stroke="#3f83ea" stroke-width="0.8"/></svg>
<span class="t" style="left:555px;top:69px;font-size:7.5px;transform:scaleX(0.8617);color:#2b2b2b;-webkit-text-stroke:0.12px #2b2b2b;">Create PDF and</span>
<span class="t" style="left:551.1px;top:79px;font-size:7.5px;transform:scaleX(0.9041);color:#2b2b2b;-webkit-text-stroke:0.12px #2b2b2b;">Share via Outlook</span>
<svg class="a" style="left:616.5px;top:48.6px;" width="19.5" height="16.5" viewBox="0 0 19.5 16.5"><path d="M8 14.200H1.600c-1 0 -1.200 -0.800 -0.800 -1.600c0.800 -1.800 2.400 -2.800 3.800 -3.200c-1 -0.900 -1.600 -2.400 -1.600 -4.200a3.600 3.600 0 0 1 7.200 0c0 1.800 -0.600 3.300 -1.600 4.200c0.800 0.200 1.400 0.500 1.900 0.900" fill="none" stroke="#2d7be8" stroke-width="1.150"/><path d="M8.800 11.600l1.800 2M10.600 11.600l-1.800 2M11.800 13.400l1 -1.800l0.900 1.800l0.900 -1.800l0.900 1.800l0.900 -1.600l0.800 1" fill="none" stroke="#2d7be8" stroke-width="0.800"/><path d="M8.600 15.800h10.400" stroke="#2d7be8" stroke-width="1"/></svg>
<span class="t" style="left:613.9px;top:69px;font-size:7.5px;transform:scaleX(0.8627);color:#2b2b2b;-webkit-text-stroke:0.12px #2b2b2b;">Request</span>
<span class="t" style="left:609.8px;top:79px;font-size:7.5px;transform:scaleX(0.8896);color:#2b2b2b;-webkit-text-stroke:0.12px #2b2b2b;">Signatures</span>
<span class="t" style="left:550.6px;top:93px;font-size:7.5px;transform:scaleX(0.9145);color:#2b2b2b;-webkit-text-stroke:0.12px #2b2b2b;">Adobe Acrobat</span>
<div class="a" style="left:647.1px;top:46.5px;width:1px;height:52.5px;background:#ececec;"></div>
<svg class="a" style="left:658.5px;top:47.5px;" width="13.5" height="18.5" viewBox="0 0 13.5 18.5"><rect x="3.500" y="0.500" width="6.600" height="12.200" rx="3.300" fill="#86bdf0" stroke="#3b88e2" stroke-width="0.900"/><path d="M1 9.6v0.4a5.8 5.8 0 0 0 11.6 0v-0.4M6.8 15.8v2.4" fill="none" stroke="#7a7a7a" stroke-width="0.9"/></svg>
<span class="t" style="left:654.1px;top:70px;font-size:7.5px;transform:scaleX(0.9296);color:#2b2b2b;-webkit-text-stroke:0.12px #2b2b2b;">Dictate</span>
<svg class="a" style="left:663px;top:81.2px;" width="4" height="2.4" viewBox="0 0 4 2.4"><path d="M0.4 0.4L2 2L3.6 0.4" fill="none" stroke="#444" stroke-width="0.9"/></svg>
<span class="t" style="left:657px;top:93px;font-size:7.5px;transform:scaleX(0.8393);color:#2b2b2b;-webkit-text-stroke:0.12px #2b2b2b;">Voice</span>
<div class="a" style="left:681px;top:46.5px;width:1px;height:52.5px;background:#ececec;"></div>
<svg class="a" style="left:696.5px;top:48px;" width="18" height="17.5" viewBox="0 0 18 17.5"><path d="M6.400 1.400H1.400a0.600 0.600 0 0 0 -0.600 0.600V16.200a0.600 0.600 0 0 0 0.600 0.600h11.400a0.600 0.600 0 0 0 0.600 -0.600V9.600" fill="#fff" stroke="#6aaef0" stroke-width="1"/><g transform="rotate(-42 9 7.500)"><rect x="1.200" y="4.900" width="9.600" height="5.400" rx="0.600" fill="#3d8fe8"/><path d="M2.600 7.600h6.800" stroke="#cfe5fb" stroke-width="2.600" stroke-dasharray="0.700 0.700"/><rect x="11.400" y="4.200" width="1.700" height="6.800" fill="#2f7fe0"/><rect x="13.800" y="5.300" width="3.200" height="4.600" rx="0.600" fill="#fff" stroke="#2f7fe0" stroke-width="1"/></g></svg>
<span class="t" style="left:688px;top:69px;font-size:7.5px;transform:scaleX(0.9152);color:#2b2b2b;-webkit-text-stroke:0.12px #2b2b2b;">Sensitivity</span>
<svg class="a" style="left:701.3px;top:80.7px;" width="4" height="2.4" viewBox="0 0 4 2.4"><path d="M0.4 0.4L2 2L3.6 0.4" fill="none" stroke="#444" stroke-width="0.9"/></svg>
<span class="t" style="left:688.9px;top:93px;font-size:7.5px;transform:scaleX(0.8738);color:#2b2b2b;-webkit-text-stroke:0.12px #2b2b2b;">Sensitivity</span>
<div class="a" style="left:724.5px;top:46.5px;width:1px;height:52.5px;background:#ececec;"></div>
<svg class="a" style="left:735px;top:48.8px;" width="17.2" height="16.2" viewBox="0 0 17.2 16.2"><rect x="0.600" y="0.600" width="16" height="15" rx="0.600" fill="#fbe3d9" stroke="#ea8763" stroke-width="1.100"/><rect x="2.300" y="2.200" width="5.400" height="5.200" fill="#fff" stroke="#ea8763" stroke-width="0.700"/><rect x="9.500" y="2.200" width="5.400" height="5.200" fill="#fff" stroke="#ea8763" stroke-width="0.700"/><rect x="2.300" y="8.800" width="5.400" height="5.200" fill="#fff" stroke="#ea8763" stroke-width="0.700"/><rect x="9.500" y="8.800" width="5.400" height="5.200" fill="#fff" stroke="#ea8763" stroke-width="0.700"/></svg>
<span class="t" style="left:731.3px;top:69px;font-size:7.5px;transform:scaleX(0.9673);color:#2b2b2b;-webkit-text-stroke:0.12px #2b2b2b;">Add-ins</span>
<span class="t" style="left:732.2px;top:93px;font-size:7.5px;transform:scaleX(0.8965);color:#2b2b2b;-webkit-text-stroke:0.12px #2b2b2b;">Add-ins</span>
<div class="a" style="left:761.3px;top:46.5px;width:1px;height:52.5px;background:#ececec;"></div>
<svg class="a" style="left:769.5px;top:48px;" width="19.5" height="18.5" viewBox="0 0 19.5 18.5"><path d="M1.400 17l1.500 -4.500L11.600 1.200l2.500 1.700L5.400 14.600z" fill="#fff" stroke="#1f57c3" stroke-width="1.100" stroke-linejoin="round"/><path d="M1.400 17l1.100 -2.900l1.800 1.300z" fill="#1f57c3"/><path d="M10.800 5.800h5.600M8.200 10.200h7M5.600 14.600h5.600" stroke="#1f57c3" stroke-width="2.500" stroke-linecap="round"/></svg>
<span class="t" style="left:769.8px;top:69px;font-size:7.5px;transform:scaleX(0.9187);color:#2b2b2b;-webkit-text-stroke:0.12px #2b2b2b;">Editor</span>
<svg class="a" style="left:796px;top:48.5px;" width="19.5" height="17" viewBox="0 0 19.5 17"><path d="M5.4 0.8h6.2c1.2 0 2 0.6 2.4 1.8l0.6 1.8h1.8c1.6 0 2.6 1.2 2.2 2.8l-1.4 5.6c-0.4 1.6 -1.6 2.6 -3.2 2.6H7.6c-1.2 0 -2 -0.6 -2.4 -1.8l-0.6 -1.8H3c-1.6 0 -2.6 -1.2 -2.2 -2.8l1.4 -5.6C2.6 1.8 3.8 0.8 5.4 0.8z" fill="#fff" stroke="#3b74d6" stroke-width="1"/><path d="M11.4 0.9c-1.2 0.3 -1.8 1.3 -2.2 2.7l-2 7c-0.4 1.4 -1.2 2.2 -2.6 2.3M14.6 4.4h-3.200c-1.2 0 -1.800 0.6 -2.200 1.800" fill="none" stroke="#3b74d6" stroke-width="0.9"/><path d="M11.600 0.900l2.200 1.200l0.700 2.300h-3.500z" fill="#8fb2ea"/><path d="M5 11.800l0.600 2.100l2 1.400l1 -3.500z" fill="#8fb2ea"/></svg>
<span class="t" style="left:793.9px;top:69px;font-size:7.5px;transform:scaleX(0.9766);color:#2b2b2b;-webkit-text-stroke:0.12px #2b2b2b;">Copilot</span>
<div class="a" style="left:822px;top:46.5px;width:1px;height:52.5px;background:#ececec;"></div>
<div class="a" style="left:265.4px;top:104px;width:569.9px;height:9px;background:#fdfdfc;"></div>
<div class="a" style="left:124px;top:115px;width:776px;height:0.8px;background:#e0ddd8;"></div>
<div class="a" style="left:138.2px;top:104px;width:0.9px;height:692px;background:#dfddd9;"></div>
<svg class="a" style="left:129.5px;top:106.6px;" width="4.4" height="4.6" viewBox="0 0 4.4 4.6"><path d="M0.6 0V4H4.2" fill="none" stroke="#3a3a3a" stroke-width="1.1"/></svg>
<div class="a" style="left:177.38px;top:106.6px;width:0.8px;height:4.4px;background:#7e7e7e;"></div>
<div class="a" style="left:188.23px;top:108.2px;width:1px;height:0.9px;background:#9a9a9a;"></div>
<div class="a" style="left:199.18px;top:108.2px;width:1px;height:0.9px;background:#9a9a9a;"></div>
<div class="a" style="left:210.14px;top:108.2px;width:1px;height:0.9px;background:#9a9a9a;"></div>
<div class="a" style="left:221.19px;top:106.6px;width:0.8px;height:4.4px;background:#7e7e7e;"></div>
<div class="a" style="left:232.04px;top:108.2px;width:1px;height:0.9px;background:#9a9a9a;"></div>
<div class="a" style="left:242.99px;top:108.2px;width:1px;height:0.9px;background:#9a9a9a;"></div>
<div class="a" style="left:253.95px;top:108.2px;width:1px;height:0.9px;background:#9a9a9a;"></div>
<div class="a" style="left:275.85px;top:108.2px;width:1px;height:0.9px;background:#9a9a9a;"></div>
<div class="a" style="left:286.8px;top:108.2px;width:1px;height:0.9px;background:#9a9a9a;"></div>
<div class="a" style="left:297.76px;top:108.2px;width:1px;height:0.9px;background:#9a9a9a;"></div>
<div class="a" style="left:308.81px;top:107.4px;width:0.8px;height:2.8px;background:#8a8a8a;"></div>
<div class="a" style="left:319.66px;top:108.2px;width:1px;height:0.9px;background:#9a9a9a;"></div>
<div class="a" style="left:330.62px;top:108.2px;width:1px;height:0.9px;background:#9a9a9a;"></div>
<div class="a" style="left:341.57px;top:108.2px;width:1px;height:0.9px;background:#9a9a9a;"></div>
<span class="t" style="left:351.12px;top:106px;font-size:6.4px;color:#4a4a4a;">1</span>
<div class="a" style="left:363.47px;top:108.2px;width:1px;height:0.9px;background:#9a9a9a;"></div>
<div class="a" style="left:374.42px;top:108.2px;width:1px;height:0.9px;background:#9a9a9a;"></div>
<div class="a" style="left:385.38px;top:108.2px;width:1px;height:0.9px;background:#9a9a9a;"></div>
<div class="a" style="left:396.43px;top:107.4px;width:0.8px;height:2.8px;background:#8a8a8a;"></div>
<div class="a" style="left:407.28px;top:108.2px;width:1px;height:0.9px;background:#9a9a9a;"></div>
<div class="a" style="left:418.24px;top:108.2px;width:1px;height:0.9px;background:#9a9a9a;"></div>
<div class="a" style="left:429.19px;top:108.2px;width:1px;height:0.9px;background:#9a9a9a;"></div>
<span class="t" style="left:438.74px;top:106px;font-size:6.4px;color:#4a4a4a;">2</span>
<div class="a" style="left:451.09px;top:108.2px;width:1px;height:0.9px;background:#9a9a9a;"></div>
<div class="a" style="left:462.04px;top:108.2px;width:1px;height:0.9px;background:#9a9a9a;"></div>
<div class="a" style="left:473px;top:108.2px;width:1px;height:0.9px;background:#9a9a9a;"></div>
<div class="a" style="left:484.05px;top:107.4px;width:0.8px;height:2.8px;background:#8a8a8a;"></div>
<div class="a" style="left:494.9px;top:108.2px;width:1px;height:0.9px;background:#9a9a9a;"></div>
<div class="a" style="left:505.86px;top:108.2px;width:1px;height:0.9px;background:#9a9a9a;"></div>
<div class="a" style="left:516.81px;top:108.2px;width:1px;height:0.9px;background:#9a9a9a;"></div>
<span class="t" style="left:526.36px;top:106px;font-size:6.4px;color:#4a4a4a;">3</span>
<div class="a" style="left:538.71px;top:108.2px;width:1px;height:0.9px;background:#9a9a9a;"></div>
<div class="a" style="left:549.66px;top:108.2px;width:1px;height:0.9px;background:#9a9a9a;"></div>
<div class="a" style="left:560.62px;top:108.2px;width:1px;height:0.9px;background:#9a9a9a;"></div>
<div class="a" style="left:571.67px;top:107.4px;width:0.8px;height:2.8px;background:#8a8a8a;"></div>
<div class="a" style="left:582.52px;top:108.2px;width:1px;height:0.9px;background:#9a9a9a;"></div>
<div class="a" style="left:593.48px;top:108.2px;width:1px;height:0.9px;background:#9a9a9a;"></div>
<div class="a" style="left:604.43px;top:108.2px;width:1px;height:0.9px;background:#9a9a9a;"></div>
<span class="t" style="left:613.98px;top:106px;font-size:6.4px;color:#4a4a4a;">4</span>
<div class="a" style="left:626.33px;top:108.2px;width:1px;height:0.9px;background:#9a9a9a;"></div>
<div class="a" style="left:637.28px;top:108.2px;width:1px;height:0.9px;background:#9a9a9a;"></div>
<div class="a" style="left:648.24px;top:108.2px;width:1px;height:0.9px;background:#9a9a9a;"></div>
<div class="a" style="left:659.29px;top:107.4px;width:0.8px;height:2.8px;background:#8a8a8a;"></div>
<div class="a" style="left:670.14px;top:108.2px;width:1px;height:0.9px;background:#9a9a9a;"></div>
<div class="a" style="left:681.1px;top:108.2px;width:1px;height:0.9px;background:#9a9a9a;"></div>
<div class="a" style="left:692.05px;top:108.2px;width:1px;height:0.9px;background:#9a9a9a;"></div>
<span class="t" style="left:701.6px;top:106px;font-size:6.4px;color:#4a4a4a;">5</span>
<div class="a" style="left:713.95px;top:108.2px;width:1px;height:0.9px;background:#9a9a9a;"></div>
<div class="a" style="left:724.9px;top:108.2px;width:1px;height:0.9px;background:#9a9a9a;"></div>
<div class="a" style="left:735.86px;top:108.2px;width:1px;height:0.9px;background:#9a9a9a;"></div>
<div class="a" style="left:746.91px;top:107.4px;width:0.8px;height:2.8px;background:#8a8a8a;"></div>
<div class="a" style="left:757.76px;top:108.2px;width:1px;height:0.9px;background:#9a9a9a;"></div>
<div class="a" style="left:768.72px;top:108.2px;width:1px;height:0.9px;background:#9a9a9a;"></div>
<div class="a" style="left:779.67px;top:108.2px;width:1px;height:0.9px;background:#9a9a9a;"></div>
<span class="t" style="left:789.22px;top:106px;font-size:6.4px;color:#4a4a4a;">6</span>
<div class="a" style="left:801.57px;top:108.2px;width:1px;height:0.9px;background:#9a9a9a;"></div>
<div class="a" style="left:812.52px;top:108.2px;width:1px;height:0.9px;background:#9a9a9a;"></div>
<div class="a" style="left:823.48px;top:108.2px;width:1px;height:0.9px;background:#9a9a9a;"></div>
<div class="a" style="left:845.38px;top:108.2px;width:1px;height:0.9px;background:#9a9a9a;"></div>
<div class="a" style="left:856.34px;top:108.2px;width:1px;height:0.9px;background:#9a9a9a;"></div>
<div class="a" style="left:867.29px;top:108.2px;width:1px;height:0.9px;background:#9a9a9a;"></div>
<div class="a" style="left:878.34px;top:106.6px;width:0.8px;height:4.4px;background:#7e7e7e;"></div>
<div class="a" style="left:889.19px;top:108.2px;width:1px;height:0.9px;background:#9a9a9a;"></div>
<svg class="a" style="left:261.4px;top:102.6px;" width="8" height="13" viewBox="0 0 8 13"><path d="M0.6 0.5h6.8v1.4L4 5.4L0.600 1.9z" fill="#fff" stroke="#9a9a9a" stroke-width="0.6"/><path d="M4 5.6l3.400 2.600v1.200h-6.800v-1.200z" fill="#fff" stroke="#9a9a9a" stroke-width="0.6"/><rect x="0.600" y="9.800" width="6.800" height="2.600" fill="#fff" stroke="#9a9a9a" stroke-width="0.6"/></svg>
<svg class="a" style="left:831.3px;top:106.4px;" width="8" height="6.6" viewBox="0 0 8 6.6"><path d="M4 0.500l3.400 2.800v2.800h-6.800v-2.800z" fill="#fff" stroke="#9a9a9a" stroke-width="0.6"/></svg>
<div class="a" style="left:178.3px;top:132.6px;width:730px;height:662.6px;background:#fff;"></div>
<div class="a" style="left:177.6px;top:132.6px;width:0.8px;height:662.6px;background:#f4f2ee;"></div>
<div class="a" style="left:127px;top:220.2px;width:8px;height:580px;background:#fdfdfc;"></div>
<div class="a" style="left:131px;top:132.18px;width:3.2px;height:0.8px;background:#7e7e7e;"></div>
<div class="a" style="left:131.8px;top:143.13px;width:1.6px;height:0.8px;background:#9a9a9a;"></div>
<div class="a" style="left:131.8px;top:154.08px;width:1.6px;height:0.8px;background:#9a9a9a;"></div>
<div class="a" style="left:131.8px;top:165.04px;width:1.6px;height:0.8px;background:#9a9a9a;"></div>
<div class="a" style="left:131px;top:175.99px;width:3.2px;height:0.8px;background:#7e7e7e;"></div>
<div class="a" style="left:131.8px;top:186.94px;width:1.6px;height:0.8px;background:#9a9a9a;"></div>
<div class="a" style="left:131.8px;top:197.89px;width:1.6px;height:0.8px;background:#9a9a9a;"></div>
<div class="a" style="left:131.8px;top:208.85px;width:1.6px;height:0.8px;background:#9a9a9a;"></div>
<div class="a" style="left:131.8px;top:230.75px;width:1.6px;height:0.8px;background:#9a9a9a;"></div>
<div class="a" style="left:131.8px;top:241.7px;width:1.6px;height:0.8px;background:#9a9a9a;"></div>
<div class="a" style="left:131.8px;top:252.66px;width:1.6px;height:0.8px;background:#9a9a9a;"></div>
<div class="a" style="left:131px;top:263.61px;width:3.2px;height:0.8px;background:#7e7e7e;"></div>
<div class="a" style="left:131.8px;top:274.56px;width:1.6px;height:0.8px;background:#9a9a9a;"></div>
<div class="a" style="left:131.8px;top:285.51px;width:1.6px;height:0.8px;background:#9a9a9a;"></div>
<div class="a" style="left:131.8px;top:296.47px;width:1.6px;height:0.8px;background:#9a9a9a;"></div>
<span class="t" style="left:0px;top:-5px;font-size:6px;color:#4a4a4a;left:128.6px;top:309.82px;transform:rotate(-90deg);transform-origin:0 0;">1</span>
<div class="a" style="left:131.8px;top:318.37px;width:1.6px;height:0.8px;background:#9a9a9a;"></div>
<div class="a" style="left:131.8px;top:329.33px;width:1.6px;height:0.8px;background:#9a9a9a;"></div>
<div class="a" style="left:131.8px;top:340.28px;width:1.6px;height:0.8px;background:#9a9a9a;"></div>
<div class="a" style="left:131px;top:351.23px;width:3.2px;height:0.8px;background:#7e7e7e;"></div>
<div class="a" style="left:131.8px;top:362.18px;width:1.6px;height:0.8px;background:#9a9a9a;"></div>
<div class="a" style="left:131.8px;top:373.13px;width:1.6px;height:0.8px;background:#9a9a9a;"></div>
<div class="a" style="left:131.8px;top:384.09px;width:1.6px;height:0.8px;background:#9a9a9a;"></div>
<span class="t" style="left:0px;top:-5px;font-size:6px;color:#4a4a4a;left:128.6px;top:397.44px;transform:rotate(-90deg);transform-origin:0 0;">2</span>
<div class="a" style="left:131.8px;top:405.99px;width:1.6px;height:0.8px;background:#9a9a9a;"></div>
<div class="a" style="left:131.8px;top:416.95px;width:1.6px;height:0.8px;background:#9a9a9a;"></div>
<div class="a" style="left:131.8px;top:427.9px;width:1.6px;height:0.8px;background:#9a9a9a;"></div>
<div class="a" style="left:131px;top:438.85px;width:3.2px;height:0.8px;background:#7e7e7e;"></div>
<div class="a" style="left:131.8px;top:449.8px;width:1.6px;height:0.8px;background:#9a9a9a;"></div>
<div class="a" style="left:131.8px;top:460.75px;width:1.6px;height:0.8px;background:#9a9a9a;"></div>
<div class="a" style="left:131.8px;top:471.71px;width:1.6px;height:0.8px;background:#9a9a9a;"></div>
<span class="t" style="left:0px;top:-5px;font-size:6px;color:#4a4a4a;left:128.6px;top:485.06px;transform:rotate(-90deg);transform-origin:0 0;">3</span>
<div class="a" style="left:131.8px;top:493.61px;width:1.6px;height:0.8px;background:#9a9a9a;"></div>
<div class="a" style="left:131.8px;top:504.56px;width:1.6px;height:0.8px;background:#9a9a9a;"></div>
<div class="a" style="left:131.8px;top:515.52px;width:1.6px;height:0.8px;background:#9a9a9a;"></div>
<div class="a" style="left:131px;top:526.47px;width:3.2px;height:0.8px;background:#7e7e7e;"></div>
<div class="a" style="left:131.8px;top:537.42px;width:1.6px;height:0.8px;background:#9a9a9a;"></div>
<div class="a" style="left:131.8px;top:548.38px;width:1.6px;height:0.8px;background:#9a9a9a;"></div>
<div class="a" style="left:131.8px;top:559.33px;width:1.6px;height:0.8px;background:#9a9a9a;"></div>
<span class="t" style="left:0px;top:-5px;font-size:6px;color:#4a4a4a;left:128.6px;top:572.68px;transform:rotate(-90deg);transform-origin:0 0;">4</span>
<div class="a" style="left:131.8px;top:581.23px;width:1.6px;height:0.8px;background:#9a9a9a;"></div>
<div class="a" style="left:131.8px;top:592.19px;width:1.6px;height:0.8px;background:#9a9a9a;"></div>
<div class="a" style="left:131.8px;top:603.14px;width:1.6px;height:0.8px;background:#9a9a9a;"></div>
<div class="a" style="left:131px;top:614.09px;width:3.2px;height:0.8px;background:#7e7e7e;"></div>
<div class="a" style="left:131.8px;top:625.04px;width:1.6px;height:0.8px;background:#9a9a9a;"></div>
<div class="a" style="left:131.8px;top:636px;width:1.6px;height:0.8px;background:#9a9a9a;"></div>
<div class="a" style="left:131.8px;top:646.95px;width:1.6px;height:0.8px;background:#9a9a9a;"></div>
<span class="t" style="left:0px;top:-5px;font-size:6px;color:#4a4a4a;left:128.6px;top:660.3px;transform:rotate(-90deg);transform-origin:0 0;">5</span>
<div class="a" style="left:131.8px;top:668.85px;width:1.6px;height:0.8px;background:#9a9a9a;"></div>
<div class="a" style="left:131.8px;top:679.8px;width:1.6px;height:0.8px;background:#9a9a9a;"></div>
<div class="a" style="left:131.8px;top:690.76px;width:1.6px;height:0.8px;background:#9a9a9a;"></div>
<div class="a" style="left:131px;top:701.71px;width:3.2px;height:0.8px;background:#7e7e7e;"></div>
<div class="a" style="left:131.8px;top:712.66px;width:1.6px;height:0.8px;background:#9a9a9a;"></div>
<div class="a" style="left:131.8px;top:723.62px;width:1.6px;height:0.8px;background:#9a9a9a;"></div>
<div class="a" style="left:131.8px;top:734.57px;width:1.6px;height:0.8px;background:#9a9a9a;"></div>
<span class="t" style="left:0px;top:-5px;font-size:6px;color:#4a4a4a;left:128.6px;top:747.92px;transform:rotate(-90deg);transform-origin:0 0;">6</span>
<div class="a" style="left:131.8px;top:756.47px;width:1.6px;height:0.8px;background:#9a9a9a;"></div>
<div class="a" style="left:131.8px;top:767.43px;width:1.6px;height:0.8px;background:#9a9a9a;"></div>
<div class="a" style="left:131.8px;top:778.38px;width:1.6px;height:0.8px;background:#9a9a9a;"></div>
<div class="a" style="left:131px;top:789.33px;width:3.2px;height:0.8px;background:#7e7e7e;"></div>
<div class="a" style="left:124px;top:795px;width:776px;height:5px;background:#f3f2f1;border-top:1px solid #dcdad7;"></div>
<div class="a" style="left:0px;top:795px;width:900px;height:5px;overflow:hidden;"><span class="t" style="left:132px;top:3px;font-size:7px;transform:scaleX(0.9495);color:#444;">Page 1 of 1</span><span class="t" style="left:176px;top:3px;font-size:7px;transform:scaleX(0.9792);color:#444;">0 words</span><svg class="a" style="left:283px;top:3.2px;" width="8" height="8" viewBox="0 0 8 8"><rect x="0.5" y="0.5" width="7" height="6" fill="none" stroke="#444" stroke-width="0.8"/></svg><svg class="a" style="left:301px;top:2.6px;" width="8" height="8" viewBox="0 0 8 8"><circle cx="4" cy="2" r="1.4" fill="#444"/><path d="M1 4h6" stroke="#444" stroke-width="0.9"/></svg><span class="t" style="left:755px;top:4px;font-size:6.6px;transform:scaleX(0.7233);color:#444;">Focus</span><svg class="a" style="left:797px;top:3.2px;" width="9" height="8" viewBox="0 0 9 8"><rect x="0.5" y="0.5" width="8" height="6" fill="none" stroke="#555" stroke-width="0.8"/><path d="M4.500 0.500v6" stroke="#555" stroke-width="0.700"/></svg><div class="a" style="left:814px;top:1px;width:22px;height:6px;background:#d6d6d6;"></div><svg class="a" style="left:821px;top:3.2px;" width="8" height="8" viewBox="0 0 8 8"><rect x="0.5" y="0.5" width="7" height="6" fill="none" stroke="#555" stroke-width="0.8"/></svg><svg class="a" style="left:845px;top:3.2px;" width="8" height="8" viewBox="0 0 8 8"><rect x="0.5" y="0.5" width="7" height="6" fill="none" stroke="#555" stroke-width="0.8"/></svg></div>
<div class="a" style="left:124px;top:25px;width:1.3px;height:123px;background:#2c5891;"></div>
<div class="a" style="left:124px;top:148px;width:1.3px;height:557px;background:#7d9de0;"></div>
<div class="a" style="left:124px;top:705px;width:1.3px;height:95px;background:#2c5891;"></div>
</div>
<div id="dlg">
<div class="a" style="left:265.6px;top:225px;width:365.6px;height:107.8px;background:#f8f8f8;border-radius:4.5px;box-shadow:0 0 1.5px rgba(0,0,0,.2),0 2px 5px rgba(0,0,0,.06),0 10px 32px rgba(0,0,0,.21);"></div>
<svg class="a" style="left:271.7px;top:231.8px;" width="10.4" height="9.6" viewBox="0 0 10.4 9.6"><defs><linearGradient id="cg1" x1="0" y1="0" x2="1" y2="0"><stop offset="0" stop-color="#1a93e4"/><stop offset="1" stop-color="#0b52cf"/></linearGradient></defs><path d="M1.600 0.100H6.600a1.200 1.200 0 0 1 1.100 0.800L8.500 3.100H4.800L4.200 3.300H0.100L0.700 0.900a1.200 1.200 0 0 1 0.900 -0.800z" fill="url(#cg1)"/><path d="M0.100 3.200H4.400L3.900 4.900H0.100z" fill="#21a86c"/><path d="M0.100 4.800H3.900L3.300 6.700H0.800a0.800 0.800 0 0 1 -0.700 -0.800z" fill="#f6a723"/><path d="M2.400 6.600H8.400L7.900 8.500a1.200 1.200 0 0 1 -1.100 0.800H3.800a1.200 1.200 0 0 1 -1.100 -0.800z" fill="#ee7a24"/><path d="M6.400 3H9.200a1 1 0 0 1 1 1.200L9.400 7a1 1 0 0 1 -1 0.700H5z" fill="#a94fc2"/><path d="M4.700 3.200h1.700l-1.100 3.500h-1.700z" fill="#fff"/></svg>
<span class="t" style="left:286px;top:235px;font-size:7.1px;letter-spacing:0.06px;color:#1f1f1f;-webkit-text-stroke:0.2px #1f1f1f;">Draft with Copilot</span>
<svg class="a" style="left:616px;top:232px;" width="7.4" height="7.4" viewBox="0 0 7.4 7.4"><path d="M0.500 0.500L6.900 6.900M6.900 0.500L0.500 6.900" stroke="#5a5a5a" stroke-width="0.8" fill="none"/></svg>
<div class="a" style="left:271.2px;top:248.3px;width:355px;height:60.6px;background:#fff;border:1px solid #c9c9c9;border-bottom:1.6px solid #2a61c8;border-radius:3px 3px 2.500px 2.500px;"></div>
<div class="a" style="left:278px;top:257.2px;width:0.9px;height:9px;background:#222;"></div>
<span class="t" style="left:278.4px;top:257px;font-size:8.8px;transform:scaleX(0.9233);color:#6e6e6e;">Describe what you'd like to write, including notes or an outline, and Copilot can generate a</span>
<span class="t" style="left:278.4px;top:268px;font-size:8.8px;transform:scaleX(0.9539);color:#6e6e6e;">draft to help you get started</span>
<span class="t" style="left:278.5px;top:295px;font-size:6.4px;letter-spacing:0.18px;color:#616161;">0/2000</span>
<div class="a" style="left:271.2px;top:314.3px;width:37px;height:13.4px;background:#f0f0f0;border:1px solid #e4e4e4;border-radius:2px;"></div>
<span class="t" style="left:276px;top:318px;font-size:6.9px;transform:scaleX(0.9454);color:#bdbdbd;">Generate</span>
<div class="a" style="left:311.6px;top:314.3px;width:68.6px;height:13.4px;background:#fff;border:1px solid #c6c6c6;border-radius:2px;"></div>
<svg class="a" style="left:317px;top:317px;" width="8" height="8" viewBox="0 0 8 8"><path d="M2.400 4.800l2.600 -2.700a1.100 1.100 0 0 1 1.600 1.600l-3.300 3.400a1.800 1.800 0 0 1 -2.600 -2.600l3.200 -3.300" fill="none" stroke="#3a3a3a" stroke-width="0.700" stroke-linecap="round"/></svg>
<span class="t" style="left:327.5px;top:319px;font-size:7.1px;transform:scaleX(0.9471);color:#1f1f1f;-webkit-text-stroke:0.15px #1f1f1f;">Reference a file</span>
</div>
</body>
</html>
